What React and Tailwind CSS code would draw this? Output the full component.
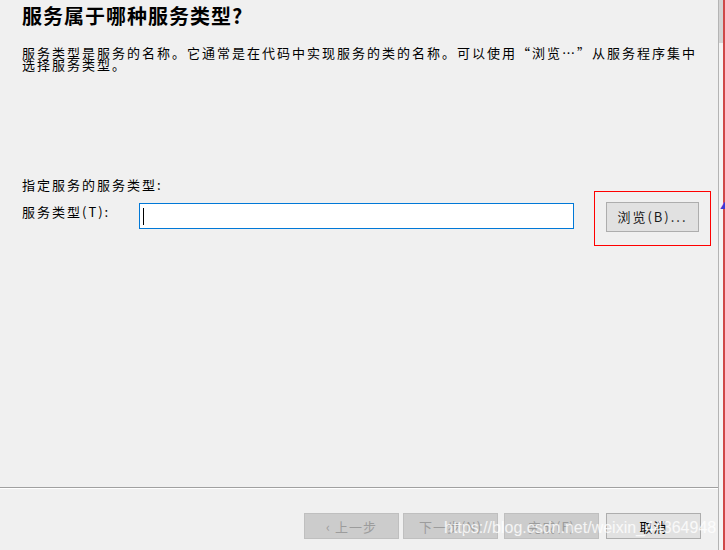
import React from 'react';

const cjk = "font-['Noto_Sans_CJK_SC','Noto_Sans',sans-serif]";

function WizardButton({ label, disabled }) {
  return (
    <button
      className={`w-[95px] h-[26px] border text-[13px] tracking-[1px] leading-none flex items-center justify-center ${
        disabled
          ? 'bg-[#cccccc] border-[#bfbfbf] text-[#9c9c9c]'
          : 'bg-[#e1e1e1] border-[#adadad] text-black'
      }`}
    >
      {label}
    </button>
  );
}

export default function App() {
  return (
    <div className={`relative w-[725px] h-[550px] overflow-hidden bg-[#f0f0f0] flex ${cjk}`}>
      {/* dialog body */}
      <div className="w-[719px] h-full flex flex-col border-r border-[#b4b4b4]">
        <div className="flex-1 flex flex-col pl-[22px] pt-[4px]">
          <h1 className="text-[20px] leading-[24px] font-bold tracking-[1px] text-black">
            服务属于哪种服务类型?
          </h1>
          <p className="mt-[19px] text-[13px] leading-[12px] tracking-[2px] text-black whitespace-nowrap">
            服务类型是服务的名称。它通常是在代码中实现服务的类的名称。可以使用“浏览…”从服务程序集中
            <br />
            选择服务类型。
          </p>

          <p className="mt-[106px] text-[13px] leading-[16px] tracking-[2px] text-black">
            指定服务的服务类型:
          </p>
          <div className="mt-[9px] flex items-start">
            <span className="w-[117px] mt-[2px] text-[13px] leading-[16px] tracking-[2px] text-black">
              服务类型(T):
            </span>
            <div className="mt-[1px] w-[435px] h-[26px] bg-white border border-[#0078d7] flex items-center pl-[3px]">
              <span className="w-px h-[17px] bg-black" />
            </div>
            <button className="ml-[32px] w-[93px] h-[30px] bg-[#e1e1e1] border border-[#adadad] text-[13px] tracking-[2px] text-[#1a1a1a] flex items-center justify-center">
              浏览(B)...
            </button>
          </div>
        </div>

        {/* separator */}
        <div className="h-[2px] border-t border-[#a0a0a0] bg-white" />

        {/* footer */}
        <div className="h-[61px] flex justify-end items-start pt-[24px] pr-[17px]">
          <WizardButton label="‹ 上一步" disabled />
          <div className="ml-[4px]">
            <WizardButton label="下一步(N)" disabled />
          </div>
          <div className="ml-[6px]">
            <WizardButton label="完成(F)" disabled />
          </div>
          <div className="ml-[7px]">
            <WizardButton label="取消" />
          </div>
        </div>
      </div>

      {/* right edge strip */}
      <div className="flex-1 flex">
        <div className="flex-1 flex flex-col">
          <div className="h-[43px] bg-[#d4d4d4]" />
          <div className="flex-1 bg-[#f4f4f4] relative">
            <span className="absolute left-[1px] top-[158px] text-[9px] leading-none text-[#3b3bd6]">▲</span>
          </div>
        </div>
        <div className="w-[2px] bg-[#d04848]" />
      </div>

      {/* annotation box */}
      <div className="absolute left-[594px] top-[191px] w-[117px] h-[55px] border border-[#ff0000]" />

      {/* watermark */}
      <span className="absolute left-[444px] top-[518px] font-['Liberation_Sans',Arial,sans-serif] text-[16px] leading-[20px] text-white/80 whitespace-nowrap">
        https://blog.csdn.net/weixin_44364948
      </span>
    </div>
  );
}
